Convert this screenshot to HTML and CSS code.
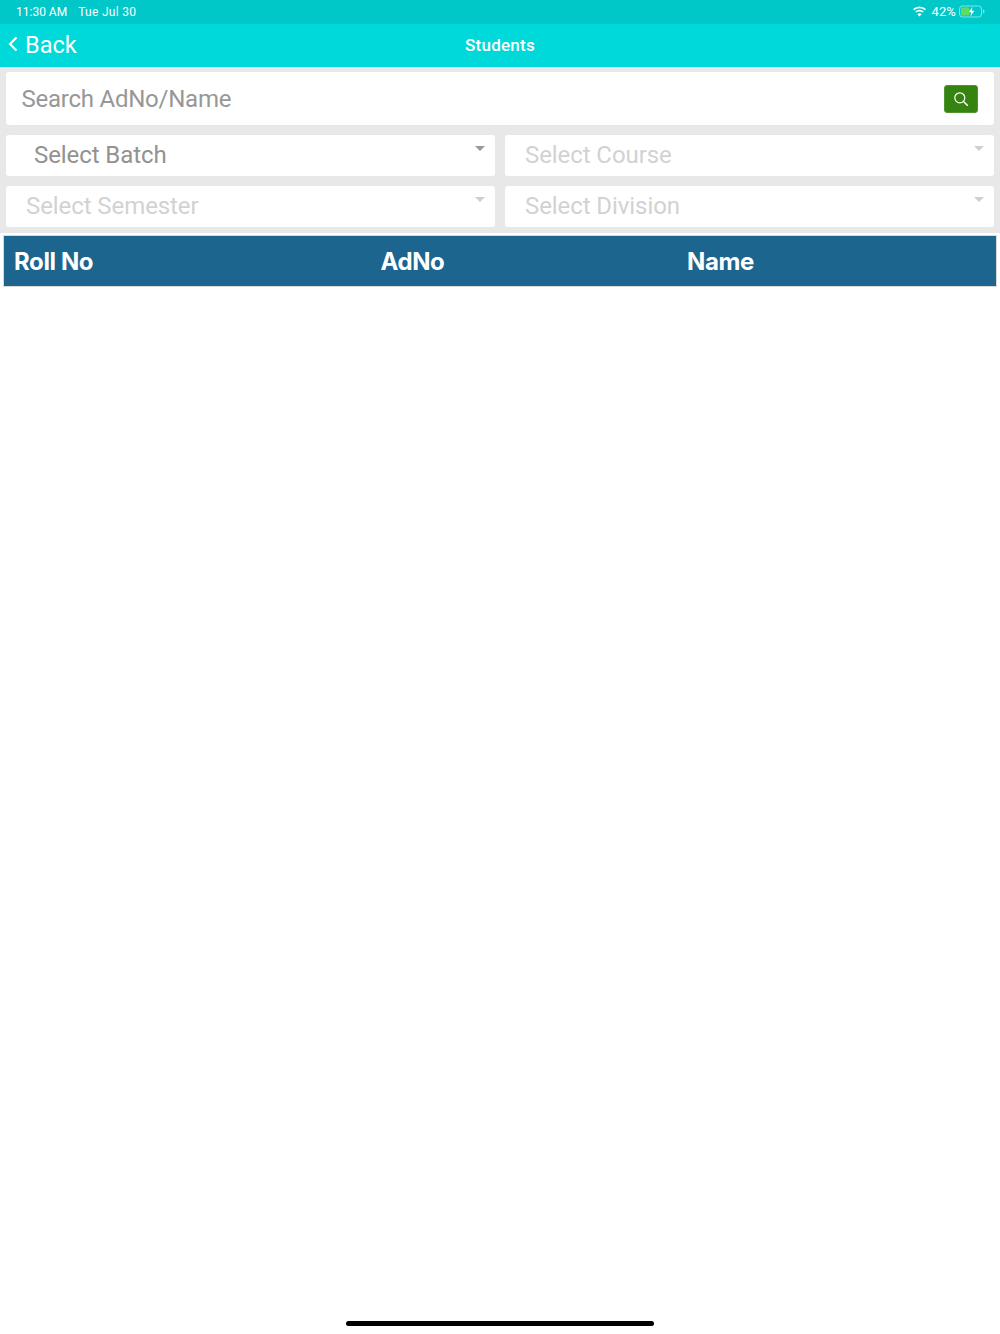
FILE: index.html
```html
<!DOCTYPE html>
<html lang="en">
<head>
<meta charset="utf-8">
<title>Students</title>
<link rel="stylesheet" href="styles.css">
</head>
<body>
<div class="page">
  <header class="header">
    <div class="status">
      <div class="status-left"><span>11:30 AM</span><span class="status-date">Tue Jul 30</span></div>
      <div class="status-right">
        <svg class="wifi" width="15" height="11" viewBox="0 0 15 11"><path d="M7.5 2.2c2.1 0 4 .8 5.4 2.1l1.1-1.2A9.6 9.6 0 0 0 7.5.5 9.6 9.6 0 0 0 1 3.1l1.1 1.2a7.9 7.9 0 0 1 5.4-2.1z" fill="#fff"/><path d="M7.5 5.4c1.2 0 2.3.4 3.2 1.2l1.1-1.2a6.400 6.400 0 0 0-8.600 0l1.100 1.200c.9-.8 2-1.200 3.200-1.200z" fill="#fff"/><path d="M7.500 10.500 9.600 8.200a3.100 3.100 0 0 0-4.200 0z" fill="#fff"/></svg>
        <span class="pct">42%</span>
        <svg class="battery" width="26" height="13" viewBox="0 0 26 13"><rect x=".5" y="1" width="22" height="11" rx="3" fill="none" stroke="#fff" stroke-opacity=".5"/><rect x="2" y="2.500" width="8.500" height="8" rx="1.500" fill="#5fdc5f"/><path d="M24 4.500c1 .3 1.500 1 1.500 2s-.5 1.700-1.500 2z" fill="#fff" fill-opacity=".5"/><path d="M13.500 1.800 9.800 7.200h2.400l-.7 4.200 3.800-5.700h-2.500z" fill="#fff"/></svg>
      </div>
    </div>
    <nav class="nav">
      <a class="back">
        <svg width="10" height="16" viewBox="0 0 10 16"><path d="M8.500 1.500 2 8l6.500 6.500" fill="none" stroke="#fff" stroke-width="2.200"/></svg>
        <span>Back</span>
      </a>
      <h1 class="title">Students</h1>
    </nav>
  </header>
  <section class="filters">
    <div class="search">
      <span class="search-text">Search AdNo/Name</span>
      <button class="search-btn" type="button">
        <svg width="16" height="16" viewBox="0 0 16 16"><circle cx="6.800" cy="6.800" r="5" fill="none" stroke="#fff" stroke-width="1.200"/><path d="m10.500 10.500 4.300 4.300" stroke="#fff" stroke-width="1.500" fill="none"/></svg>
      </button>
    </div>
    <div class="selects">
      <div class="select select-batch"><span>Select Batch</span><i class="caret"></i></div>
      <div class="select off"><span>Select Course</span><i class="caret"></i></div>
      <div class="select off"><span>Select Semester</span><i class="caret"></i></div>
      <div class="select off"><span>Select Division</span><i class="caret"></i></div>
    </div>
  </section>
  <div class="table-head">
    <div class="table-row">
      <span class="col-roll">Roll No</span>
      <span class="col-ad">AdNo</span>
      <span class="col-name">Name</span>
    </div>
  </div>
  <div class="home"></div>
</div>
</body>
</html>
```
FILE: styles.css
```css
* { box-sizing: border-box; }
html, body { margin: 0; padding: 0; background: #fff; }
body { font-family: Inter, Roboto, "Liberation Sans", sans-serif; }
.page { width: 1000px; height: 1334px; display: flex; flex-direction: column; overflow: hidden; }

.header { color: #fff; }
.status { height: 24px; background: #00c8c9; display: flex; justify-content: space-between; align-items: center; padding: 0 15px 1px 16px; font-family: Roboto, sans-serif; font-size: 12px; }
.status-left { display: flex; gap: 11px; }
.status-date { letter-spacing: .3px; }
.status-right { display: flex; align-items: center; }
.wifi { width: 15px; margin-right: 5px; }
.pct { font-size: 13px; letter-spacing: .1px; margin-right: 3px; }
.nav { height: 42.500px; background: #00d9da; position: relative; display: flex; align-items: center; justify-content: center; }
.back { position: absolute; left: 8px; top: 0; height: 42px; display: flex; align-items: center; gap: 7px; font-size: 23.500px; font-family: Roboto, sans-serif; }
.back svg { margin-top: -2px; }
.title { margin: 0; font-size: 17px; font-weight: 500; font-family: Roboto, sans-serif; letter-spacing: .25px; }

.filters { height: 166.500px; background: #e8e8e8; padding: 5.500px 6px; display: flex; flex-direction: column; gap: 10px; }
.search { height: 53px; background: #fff; border-radius: 3px; display: flex; align-items: center; justify-content: space-between; padding: 0 16px 0 15.500px; }
.search-text { font-size: 24px; color: #979797; font-family: Roboto, sans-serif; letter-spacing: -.24px; }
.search-btn { width: 34px; height: 28px; padding: 0; border: 1px solid #4f9430; border-radius: 3px; background: #35840f; display: flex; align-items: center; justify-content: center; }
.selects { display: grid; grid-template-columns: 489px 489px; column-gap: 10px; row-gap: 10px; }
.select { height: 41px; background: #fff; border-radius: 3px; font-size: 24px; color: #929292; display: flex; align-items: center; padding: 0 0 2px 20px; position: relative; font-family: Roboto, sans-serif; letter-spacing: -.08px; }
.select-batch { padding-left: 28px; }
.off { color: #d2d2d2; }
.caret { position: absolute; top: 11px; right: 10px; width: 0; height: 0; border-left: 5px solid transparent; border-right: 5px solid transparent; border-top: 5px solid #979797; }
.off .caret { border-top-color: #cfcfcf; }

.table-head { margin: 2px 3px 0; border: 1px solid #d9d9d9; }
.table-row { height: 50px; background: #1c658f; color: #fff; font-size: 24px; font-weight: 700; display: flex; align-items: center; padding-left: 10px; letter-spacing: -.4px; }
.col-roll { width: 366.500px; }
.col-ad { width: 306.500px; }

.home { width: 308px; height: 5px; border-radius: 3px; background: #000; margin: auto auto 8px; }
```
